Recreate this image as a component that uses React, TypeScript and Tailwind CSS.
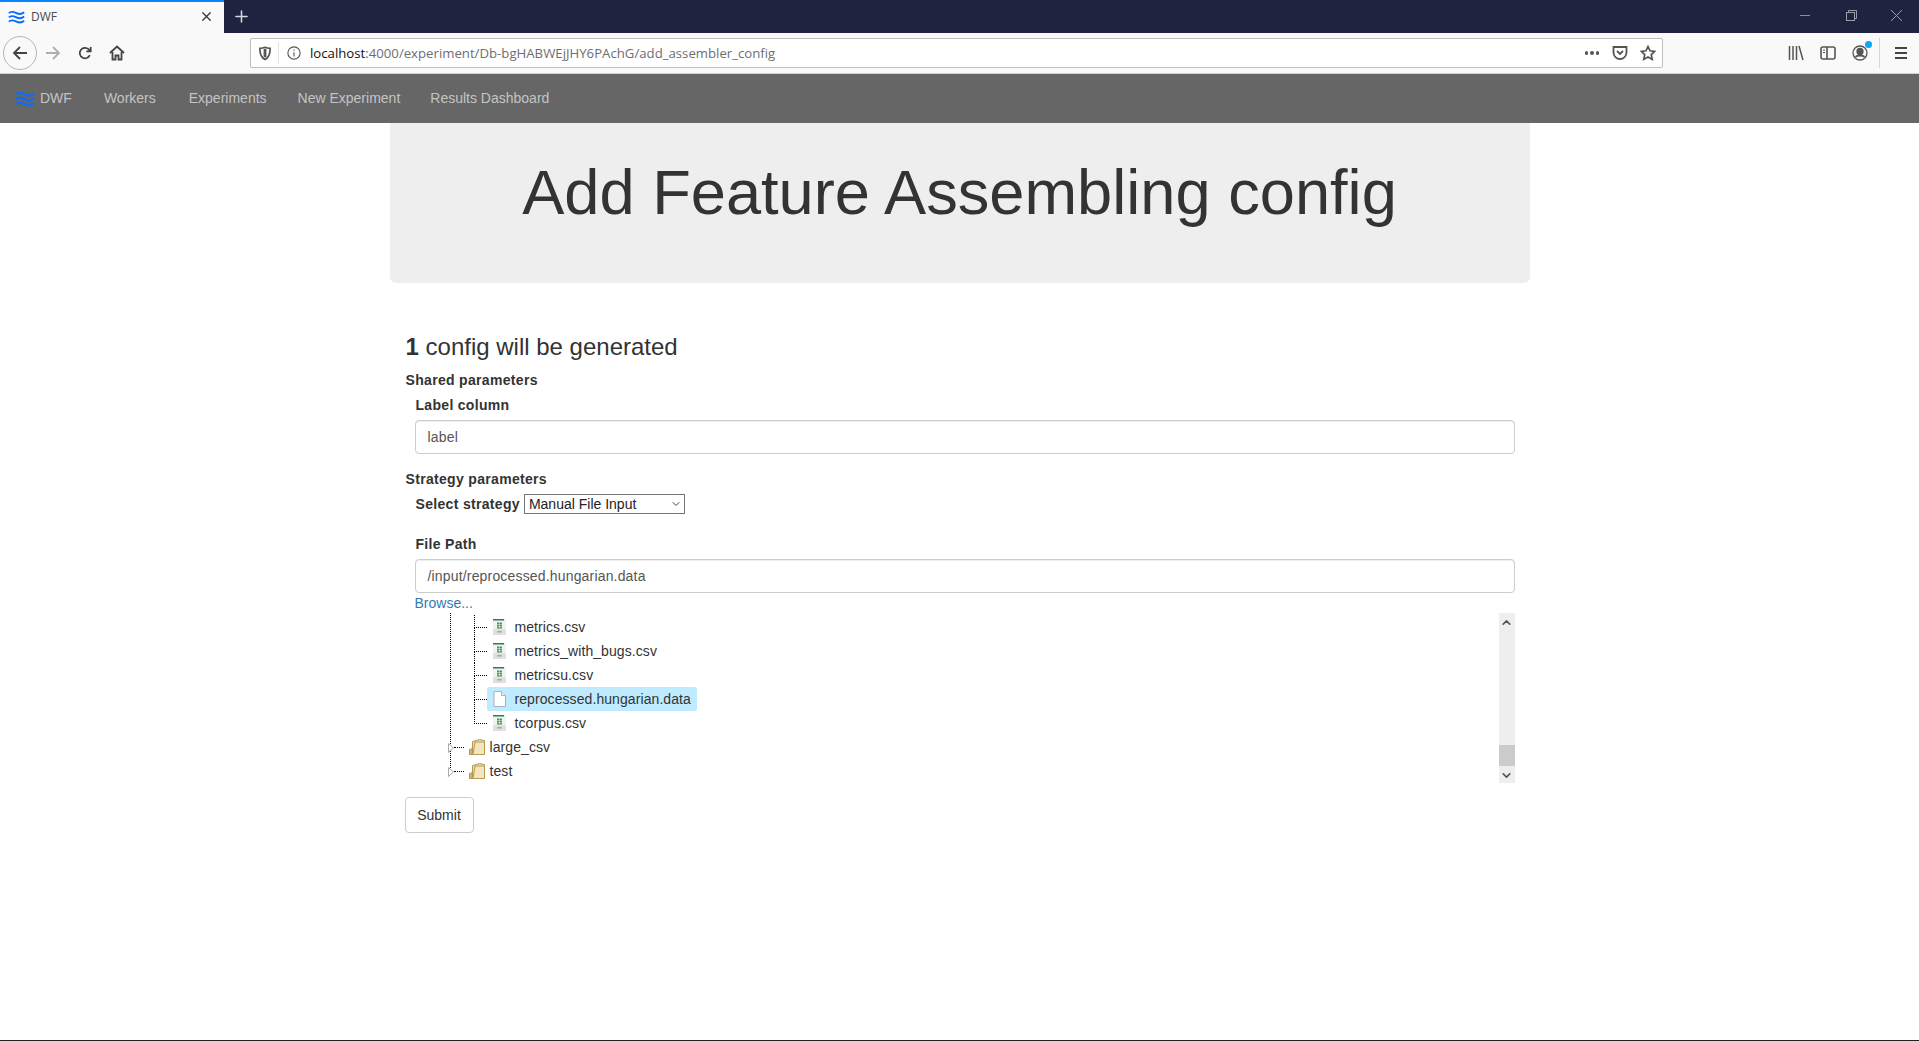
import { ChevronDown, ChevronUp, Plus, X } from "lucide-react";

function Waves({ className }: { className: string }) {
  return (
    <svg viewBox="0 0 20 16" className={className} fill="none" stroke="#0a6cff" strokeWidth="2.2">
      <path d="M1 3.500c3-3 6-1.500 9 0s6 1.500 9-1" />
      <path d="M1 8.500c3-3 6-1.500 9 0s6 1.500 9-1" />
      <path d="M1 13.500c3-3 6-1.500 9 0s6 1.500 9-1" />
    </svg>
  );
}

function TitleBar() {
  return (
    <div className="flex h-[33px] bg-[#202340]">
      <div className="flex w-[224px] items-center border-t-2 border-[#0a84ff] bg-[#f9f9fa] pr-[10px] pl-[8px] pb-[2px]">
        <Waves className="h-[16px] w-[17px]" />
        <span className="ml-[6px] flex-1 font-['Open_Sans',sans-serif] text-[12px] text-[#4a4a4f]">DWF</span>
        <X size={15} color="#333" />
      </div>
      <div className="ml-[8px] flex items-center">
        <Plus size={19} color="#d5d6dc" />
      </div>
      <div className="ml-auto flex items-center pb-[3px]">
        <div className="mr-[36px] h-px w-[10px] bg-[#8b8d9e]" />
        <svg viewBox="0 0 11 11" className="mr-[34px] h-[11px] w-[11px]" fill="none" stroke="#9b9dac">
          <rect x="0.5" y="2.500" width="8" height="8" />
          <path d="M2.500 2.500v-2h8v8h-2" />
        </svg>
        <svg viewBox="0 0 11 11" className="mr-[17px] h-[11px] w-[11px]" fill="none" stroke="#9b9dac">
          <path d="M0 0l11 11M11 0L0 11" />
        </svg>
      </div>
    </div>
  );
}

function Toolbar() {
  return (
    <div className="flex h-[41px] items-center border-b border-[#d2d2d4] bg-[#f9f9fa]">
      <div className="ml-[3px] flex h-[34px] w-[34px] items-center justify-center rounded-full border border-[#b5b5b5]">
        <svg viewBox="0 0 16 16" className="h-[16px] w-[16px]" fill="none" stroke="#444" strokeWidth="1.800">
          <path d="M15 8H2M8 2L2 8l6 6" />
        </svg>
      </div>
      <svg viewBox="0 0 16 16" className="ml-[8px] h-[16px] w-[16px]" fill="none" stroke="#aeaeb0" strokeWidth="1.800">
        <path d="M1 8h13M8 2l6 6-6 6" />
      </svg>
      <svg viewBox="0 0 16 16" className="ml-[17px] h-[14px] w-[14px]" fill="none" stroke="#444" strokeWidth="2">
        <path d="M13.500 10.500A6 6 0 1 1 12 3.500l2 2M14.500 1v5h-5" />
      </svg>
      <svg viewBox="0 0 16 16" className="ml-[17px] h-[16px] w-[16px]" fill="none" stroke="#444" strokeWidth="1.800">
        <path d="M1 8l7-6.500L15 8M3.500 7v7.500h3v-4h3v4h3V7" />
      </svg>
      <div className="ml-[125px] flex h-[30px] w-[1413px] items-center rounded-[2px] border border-[#bebebe] bg-white pr-[6px]">
        <div className="flex h-full w-[27px] items-center justify-center">
          <svg viewBox="0 0 14 16" className="h-[15px] w-[14px]" fill="none" stroke="#555" strokeWidth="1.800">
            <path d="M1.500 2.500c3 0 4-1 5.500-1s2.500 1 5.500 1c0 6-1 10-5.500 12-4.500-2-5.500-6-5.500-12z" />
            <path d="M7 3v9" strokeWidth="3" />
          </svg>
        </div>
        <div className="h-[22px] w-px bg-[#e3e3e3]" />
        <svg viewBox="0 0 16 16" className="ml-[8px] h-[14px] w-[14px]" fill="none" stroke="#555" strokeWidth="1.300">
          <circle cx="8" cy="8" r="7" />
          <path d="M8 7v5M8 4v1.500" />
        </svg>
        <span className="ml-[9px] flex-1 pt-px font-['Open_Sans',sans-serif] text-[13.2px] text-[#6e6e72]">
          <span className="text-[#111]">localhost</span>:4000/experiment/Db-bgHABWEjJHY6PAchG/add_assembler_config
        </span>
        <div className="mr-[13px] flex gap-[2px]">
          <div className="h-[3.500px] w-[3.500px] rounded-full bg-[#555]" />
          <div className="h-[3.500px] w-[3.500px] rounded-full bg-[#555]" />
          <div className="h-[3.500px] w-[3.500px] rounded-full bg-[#555]" />
        </div>
        <svg viewBox="0 0 16 16" className="mr-[12px] h-[16px] w-[16px]" fill="none" stroke="#555" strokeWidth="1.800">
          <path d="M1.500 2h13v5.500a6.500 6.500 0 0 1-13 0zM5 6l3 3 3-3" />
        </svg>
        <svg viewBox="0 0 16 16" className="h-[16px] w-[16px]" fill="none" stroke="#555" strokeWidth="1.700">
          <path d="M8 1.500l2 4.300 4.700.6-3.400 3.200.9 4.700L8 12l-4.200 2.300.9-4.700L1.300 6.400 6 5.800z" />
        </svg>
      </div>
      <svg viewBox="0 0 16 16" className="ml-[125px] h-[16px] w-[16px]" fill="none" stroke="#555" strokeWidth="1.500">
        <path d="M1.500 1v14M5 1v14M8.500 1v14M11 1l4 14" />
      </svg>
      <svg viewBox="0 0 16 14" className="ml-[16px] h-[14px] w-[16px]" fill="none" stroke="#555" strokeWidth="1.600">
        <rect x="1" y="1" width="14" height="12" rx="2" />
        <path d="M7 1v12" />
        <path d="M3 4h2M3 6.500h2" strokeWidth="1" />
      </svg>
      <div className="relative ml-[16px] h-[16px] w-[16px]">
        <svg viewBox="0 0 16 16" className="h-[16px] w-[16px]" fill="none" stroke="#555" strokeWidth="1.300">
          <circle cx="8" cy="8" r="7" />
          <circle cx="8" cy="6.500" r="3" fill="#555" />
          <path d="M3.500 12c1.500-2 7.500-2 9 0" strokeWidth="2" />
        </svg>
        <div className="absolute top-[-4px] right-[-4px] h-[7px] w-[7px] rounded-full bg-[#0fa5f5]" />
      </div>
      <div className="ml-[11px] h-[30px] w-px bg-[#d8d8d8]" />
      <div className="ml-[15px] flex flex-col gap-[3px]">
        <div className="h-[2px] w-[12px] bg-[#444]" />
        <div className="h-[2px] w-[12px] bg-[#444]" />
        <div className="h-[2px] w-[12px] bg-[#444]" />
      </div>
    </div>
  );
}

function Navbar() {
  return (
    <nav className="flex h-[49px] items-center bg-[#666] pl-[15px] text-[14px] text-[#c4c4c4]">
      <Waves className="h-[16px] w-[20px]" />
      <span className="ml-[5px]">DWF</span>
      <span className="ml-[32px]">Workers</span>
      <span className="ml-[33px]">Experiments</span>
      <span className="ml-[31px]">New Experiment</span>
      <span className="ml-[30px]">Results Dashboard</span>
    </nav>
  );
}

function CsvIcon() {
  return (
    <svg viewBox="0 0 13 16" className="h-[16px] w-[13px] shrink-0">
      <rect x="0" y="0" width="13" height="16" fill="#f1f1f1" />
      <rect x="0" y="10" width="13" height="6" fill="#e0e0e0" />
      <rect x="0" y="0" width="11" height="1.500" fill="#2e7d4f" />
      <rect x="4" y="3.500" width="5" height="6" fill="#3f9a5f" />
      <path d="M4 5.500h5M4 7.500h5M6.500 3.500v6" stroke="#d6ecd9" strokeWidth="0.600" />
      <rect x="4" y="12" width="5" height="1.500" fill="#aaa" />
    </svg>
  );
}

function DataIcon() {
  return (
    <svg viewBox="0 0 13 16" className="h-[16px] w-[13px] shrink-0" stroke="#a9b2b8" strokeWidth="1">
      <path d="M1 .5h7.500L12.500 4.500v11H1z" fill="#fff" />
      <path d="M8.500 .5v4h4" fill="#eef1f3" />
    </svg>
  );
}

function FolderIcon() {
  return (
    <svg viewBox="0 0 16 16" className="h-[16px] w-[16px] shrink-0" stroke="#b89a55" strokeWidth="1">
      <path d="M.5 15.500v-5l3-1v6z" fill="#c9b27a" />
      <path d="M3.500 2.500l7-2 5 1v14h-12z" fill="#ecdcae" />
      <path d="M6 3h9.500v12.500H4z" fill="#f3e6bf" />
    </svg>
  );
}

function Connector({ last }: { last?: boolean }) {
  return (
    <div className="flex h-full w-[13px] shrink-0 flex-col">
      <div className="h-[13px] border-b border-l border-dotted border-black" />
      {!last && <div className="flex-1 border-l border-dotted border-black" />}
    </div>
  );
}

const files = [
  { name: "metrics.csv" },
  { name: "metrics_with_bugs.csv" },
  { name: "metricsu.csv" },
  { name: "reprocessed.hungarian.data", selected: true },
  { name: "tcorpus.csv" },
];

function FileTree() {
  return (
    <div className="flex h-[170px] w-[1100px]">
      <div className="flex-1 pl-[35px]">
        <div className="h-[159px] border-l border-dotted border-black pt-[2px]">
          <div className="ml-[23px] flex flex-col">
            {files.map((f, i) => (
              <div key={f.name} className="flex h-6 items-center">
                <Connector last={i === files.length - 1} />
                <div className={`flex h-6 items-center pr-[6px] pl-[6px] ${f.selected ? "rounded-[2px] bg-[#beebff]" : ""}`}>
                  {f.selected ? <DataIcon /> : <CsvIcon />}
                  <span className="ml-[9px] text-[14px] tracking-[0.08px] whitespace-nowrap">{f.name}</span>
                </div>
              </div>
            ))}
          </div>
          {["large_csv", "test"].map((name) => (
            <div key={name} className="flex h-6 items-center">
              <div className="relative h-full w-[12px] shrink-0">
                <div className="ml-[3px] h-[13px] w-[10px] border-b border-dotted border-black" />
                <svg viewBox="0 0 6 10" className="absolute top-[8px] left-[-3px] h-[10px] w-[6px]" fill="#fff" stroke="#aaa">
                  <path d="M.5 .5v9l5-4.500z" />
                </svg>
              </div>
              <div className="ml-[6px] flex items-center">
                <FolderIcon />
                <span className="ml-[5px] text-[14px] tracking-[0.08px]">{name}</span>
              </div>
            </div>
          ))}
        </div>
      </div>
      <div className="flex w-[16px] flex-col items-center bg-[#eeeeee]">
        <ChevronUp size={13} strokeWidth={3} color="#555" className="mt-[3px]" />
        <div className="mt-[116px] h-[21px] w-[16px] bg-[#cbcbcb]" />
        <ChevronDown size={13} strokeWidth={3} color="#555" className="mt-[3px]" />
      </div>
    </div>
  );
}

function TextInput({ value }: { value: string }) {
  return (
    <div className="flex h-[34px] w-[1100px] items-center rounded-[4px] border border-[#ccc] bg-white px-3 text-[14px] tracking-[0.17px] text-[#555] shadow-[inset_0_1px_1px_rgba(0,0,0,0.075)]">
      {value}
    </div>
  );
}

export default function App() {
  return (
    <div className="flex h-[1041px] flex-col overflow-hidden border-b border-[#1f1f1f] bg-white font-['Liberation_Sans',Arial,sans-serif] text-[14px] text-[#333]">
      <TitleBar />
      <Toolbar />
      <Navbar />
      <main className="mx-auto w-[1140px]">
        <div className="flex h-[160px] justify-center rounded-b-[6px] bg-[#eee] pt-[35px]">
          <h1 className="text-[63.200px] leading-[69px]">Add Feature Assembling config</h1>
        </div>
        <div className="px-[15px] pt-[50px]">
          <h3 className="pl-px text-[24px] leading-[27px]">
            <b>1</b> config will be generated
          </h3>
          <div className="mt-[10px] pl-px leading-[20px] font-bold tracking-[0.32px]">Shared parameters</div>
          <div className="ml-[10px]">
            <div className="mt-[5px] pl-px leading-[20px] font-bold tracking-[0.3px]">Label column</div>
            <div className="mt-[5px]">
              <TextInput value="label" />
            </div>
          </div>
          <div className="mt-[15px] pl-px leading-[20px] font-bold tracking-[0.32px]">Strategy parameters</div>
          <div className="ml-[10px]">
            <div className="mt-[5px] flex h-[20px] items-center pl-px">
              <span className="font-bold tracking-[0.32px]">Select strategy</span>
              <div className="ml-[4px] flex h-[20px] w-[161px] items-center border border-[#767676] bg-white pl-[4px] text-[14px] text-[#222]">
                <span className="flex-1">Manual File Input</span>
                <ChevronDown size={12} color="#444" className="mr-[2px]" />
              </div>
            </div>
            <div className="mt-[20px] pl-px leading-[20px] font-bold tracking-[0.32px]">File Path</div>
            <div className="mt-[5px]">
              <TextInput value="/input/reprocessed.hungarian.data" />
            </div>
            <div className="leading-[20px] text-[#337ab7]">Browse...</div>
            <FileTree />
          </div>
          <button className="mt-[14px] h-[36px] w-[69px] rounded-[4px] border border-[#ccc] bg-white text-[14px]">Submit</button>
        </div>
      </main>
    </div>
  );
}
